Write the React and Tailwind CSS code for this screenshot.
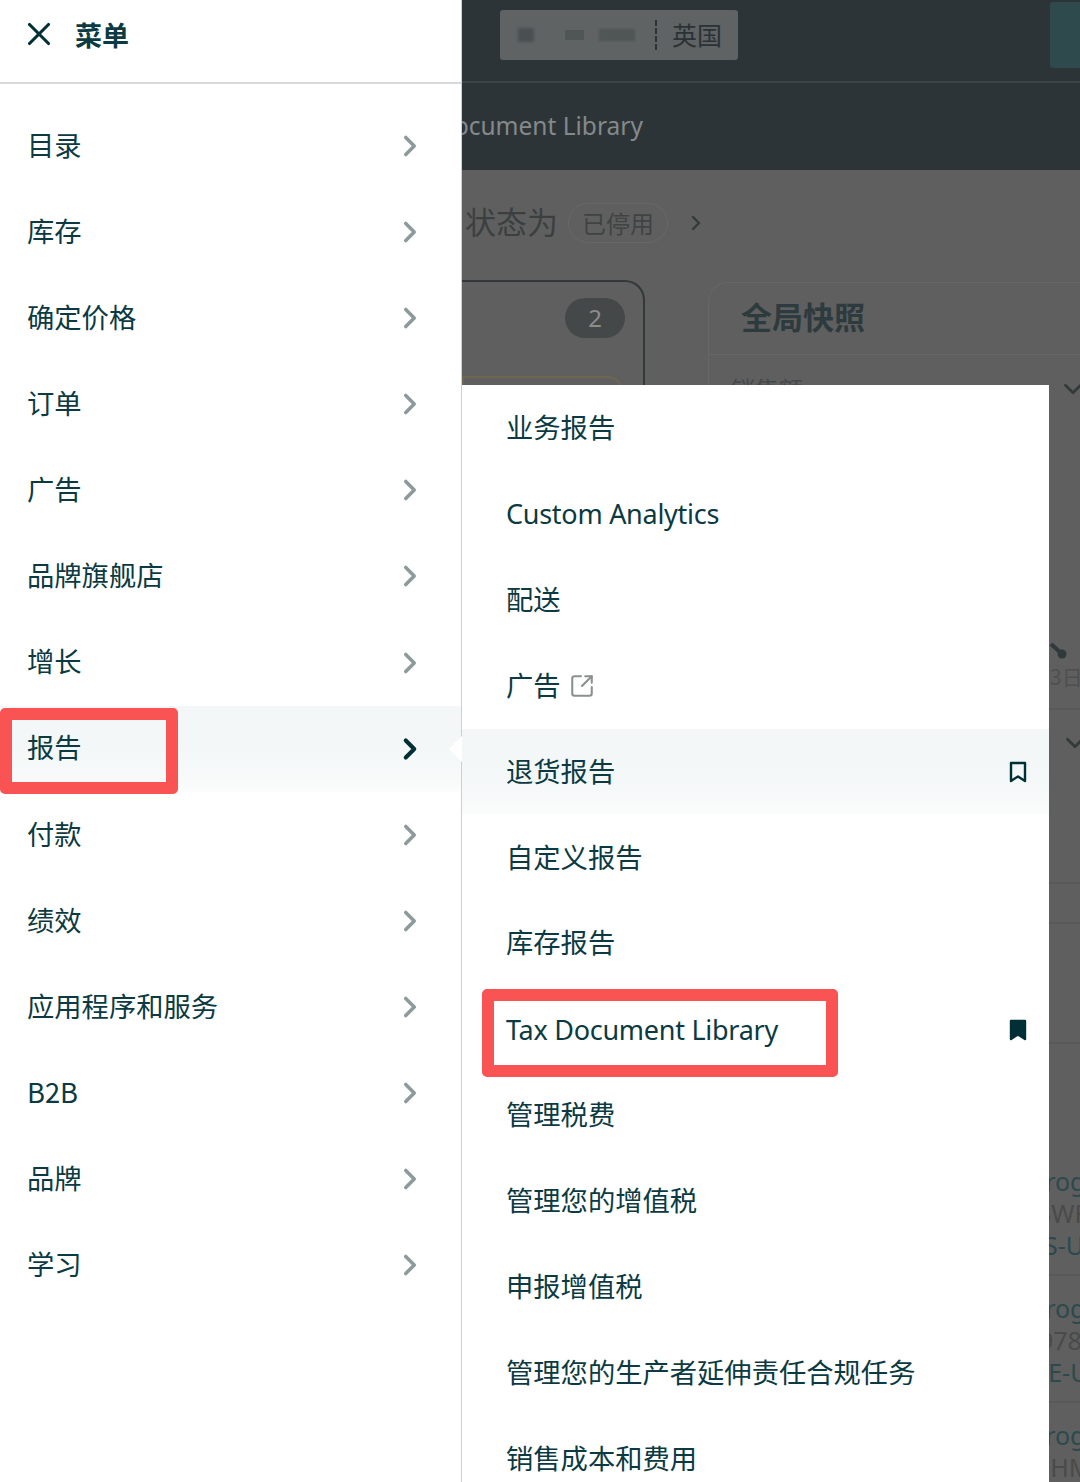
import React from "react";
import { ChevronRight, ChevronDown, X, SquareArrowOutUpRight } from "lucide-react";

const left = ["目录","库存","确定价格","订单","广告","品牌旗舰店","增长","报告","付款","绩效","应用程序和服务","B2B","品牌","学习"];
const flyout = ["业务报告","Custom Analytics","配送","广告","退货报告","自定义报告","库存报告","Tax Document Library","管理税费","管理您的增值税","申报增值税","管理您的生产者延伸责任合规任务","销售成本和费用"];

function Bookmark({ filled }) {
  return (
    <svg width="18" height="22" viewBox="0 0 18 22" fill={filled ? "#002f36" : "none"} stroke="#002f36" strokeWidth="2.4" strokeLinejoin="round">
      <path d="M2 2h14v18l-7-4.6L2 20z" />
    </svg>
  );
}

function RedBox({ className }) {
  return <div className={"absolute border-[#f95353] rounded-[5px] pointer-events-none " + className} />;
}

function LeftRow({ label }) {
  const active = label === "报告";
  return (
    <div className={"relative h-[86.08px] flex items-center pl-[27px] pr-[34px] justify-between text-[27.3px] leading-none " + (active ? "bg-gradient-to-b from-[#f3f7f7] via-[#f3f7f7] to-[#fbfcfc]" : "")}>
      <span className="pb-[3px]">{label}</span>
      {active
        ? <ChevronRight size={34} strokeWidth={2.9} color="#002f36" />
        : <ChevronRight size={34} strokeWidth={2.5} color="#8d9a9b" />}
      {active && <RedBox className="left-0 top-[2px] w-[178px] h-[86px] border-[12px]" />}
      {active && <div className="absolute right-[-1px] top-[30px] w-0 h-0 border-y-[13px] border-y-transparent border-r-[13px] border-r-white z-30" />}
    </div>
  );
}

function FlyRow({ label }) {
  const active = label === "退货报告";
  const tax = label === "Tax Document Library";
  return (
    <div className={"relative h-[85.95px] flex items-center justify-between pl-[44px] pr-[22px] text-[27.3px] leading-none " + (active ? "bg-gradient-to-b from-[#f3f7f7] via-[#f3f7f7] to-[#fbfcfc]" : "")}>
      <span className="flex items-center gap-[8px]">
        {tax || label === "Custom Analytics"
          ? <span className="text-[27px] tracking-[-0.27px] font-['Noto_Sans','Noto_Sans_CJK_SC',sans-serif]">{label}</span>
          : <span className="pb-[3px]">{label}</span>}
        {label === "广告" && <SquareArrowOutUpRight size={26} strokeWidth={1.9} color="#8a8f90" />}
      </span>
      {active && <Bookmark />}
      {tax && <Bookmark filled />}
      {tax && <RedBox className="left-[20px] top-[2px] w-[356px] h-[88px] border-[12px]" />}
    </div>
  );
}

function StripRow({ a, b, c, bClass }) {
  return (
    <div className="h-[127px] border-b-2 border-[#585858] pl-[321px] pt-[16px] whitespace-nowrap text-[25px] leading-[32px]">
      <div className="text-[#2c4a4e]">{a}</div>
      <div className={"text-[#4a4a4a] " + bClass}>{b}</div>
      <div className="text-[#2c4a4e]">{c}</div>
    </div>
  );
}

export default function App() {
  return (
    <div className="relative flex w-[1080px] h-[1482px] overflow-hidden bg-[#5f5f5f] text-[#0b3a42] font-['Noto_Sans','Noto_Sans_CJK_SC',sans-serif]">
      <aside className="relative z-20 w-[462px] shrink-0 bg-white border-r border-[#cfcfcf] font-['Noto_Sans_CJK_SC','Noto_Sans',sans-serif]">
        <header className="h-[84px] border-b-2 border-[#d8d8d8] flex items-center gap-[17px] pl-[20px] pb-[14px]">
          <X size={38} strokeWidth={2} color="#002f36" />
          <span className="text-[27px] font-bold leading-none">菜单</span>
        </header>
        <nav className="pt-[19px]">
          {left.map((l) => <LeftRow key={l} label={l} />)}
        </nav>
      </aside>

      <main className="flex-1 min-w-0 overflow-hidden">
        <div className="h-[83px] bg-[#2d3437] border-b-2 border-[#3d4447] flex items-start pl-[38px] justify-between">
          <div className="mt-[10px] w-[238px] h-[50px] rounded-[3px] bg-[#5f6364] flex items-center justify-end pr-[16px] text-[25px] text-[#2b3235] font-['Noto_Sans_CJK_SC',sans-serif]">
            <span className="mr-[auto] ml-[18px] flex items-center">
              <span className="w-[16px] h-[14px] bg-[#4a4f51] blur-[1.5px]" />
              <span className="ml-[31px] w-[19px] h-[10px] bg-[#505556] blur-[0.5px]" />
              <span className="ml-[15px] w-[36px] h-[12px] bg-[#505556] blur-[1px]" />
            </span>
            <span className="border-l-2 border-dashed border-[#2b3235] h-[30px] mr-[15px]" />
            英国
          </div>
          <div className="mt-[2px] w-[30px] h-[66px] rounded-l-[3px] bg-[#2f4a4d]" />
        </div>
        <div className="h-[87px] bg-[#2d3437] flex items-center overflow-hidden">
          <span className="ml-[-26px] text-[24.5px] text-[#84898b] whitespace-nowrap">Document Library</span>
        </div>
        <div className="h-[110px] flex items-center pl-[3px] pb-[4px] font-['Noto_Sans_CJK_SC',sans-serif] text-[#3b3f40]">
          <span className="text-[31px] leading-none pb-[6px]">状态为</span>
          <span className="ml-[10px] h-[40px] px-[13px] rounded-full border border-[#686868] flex items-center text-[24px] text-[#3f4344]">已停用</span>
          <ChevronRight className="ml-[16px]" size={24} strokeWidth={2.4} color="#34393a" />
        </div>
        <div className="flex items-start">
          <div className="w-[183px] h-[200px] shrink-0 border-2 border-l-0 border-[#33383a] rounded-tr-[20px] flex flex-col">
            <div className="h-[40px] w-[60px] mt-[16px] ml-[103px] rounded-full bg-[#454849] text-[#8a8c8d] text-[24px] flex items-center justify-center">2</div>
            <div className="mt-[38px] w-[160px] h-[30px] border-2 border-[#6d6750] rounded-tr-[14px]" />
          </div>
          <section className="ml-[63px] mt-[2px] w-[400px] shrink-0 border border-[#676767] rounded-tl-[20px] h-[1300px] overflow-hidden">
            <div className="h-[72px] border-b border-[#676767] flex items-center pl-[32px] pb-[4px] text-[31px] font-bold text-[#2d3a3e] font-['Noto_Sans_CJK_SC',sans-serif]">全局快照</div>
            <div className="h-[353px] flex flex-col pt-[16px] text-[24px] text-[#45494a] font-['Noto_Sans_CJK_SC',sans-serif]">
              <div className="flex justify-between items-center pl-[22px] pr-[19px]">
                <span>销售额</span>
                <ChevronDown size={30} strokeWidth={2.2} color="#34393a" />
              </div>
              <svg className="mt-auto ml-[340px]" width="20" height="24" viewBox="0 0 20 24">
                <path d="M2 6 L13 16" stroke="#2f3a3d" strokeWidth="4" />
                <circle cx="13" cy="16" r="4.5" fill="#2f3a3d" />
              </svg>
              <div className="mb-[20px] mt-[2px] ml-[341px] text-[21px] leading-[24px] whitespace-nowrap text-[#4f4f4f]">3日</div>
            </div>
            <div className="h-[176px] border-t-2 border-b-2 border-[#585858] pl-[351px] pt-[18px]">
              <ChevronDown size={30} strokeWidth={2.2} color="#34393a" />
            </div>
            <div className="h-[40px] border-b-2 border-[#585858]" />
            <div className="h-[120px] border-b-2 border-[#585858]" />
            <div className="h-[105px]" />
            <StripRow a="Prog" b="BWR" c="ES-U" bClass="ml-[5px]" />
            <StripRow a="Prog" b="9780" c="GE-U" bClass="ml-[9px]" />
            <StripRow a="Prog" b="BHM" c="ES-U" bClass="ml-[4px]" />
          </section>
        </div>
      </main>

      <div className="absolute left-[462px] top-[385px] w-[587px] h-[1097px] bg-white z-10 font-['Noto_Sans_CJK_SC','Noto_Sans',sans-serif]">
        {flyout.map((l) => <FlyRow key={l} label={l} />)}
      </div>
    </div>
  );
}
